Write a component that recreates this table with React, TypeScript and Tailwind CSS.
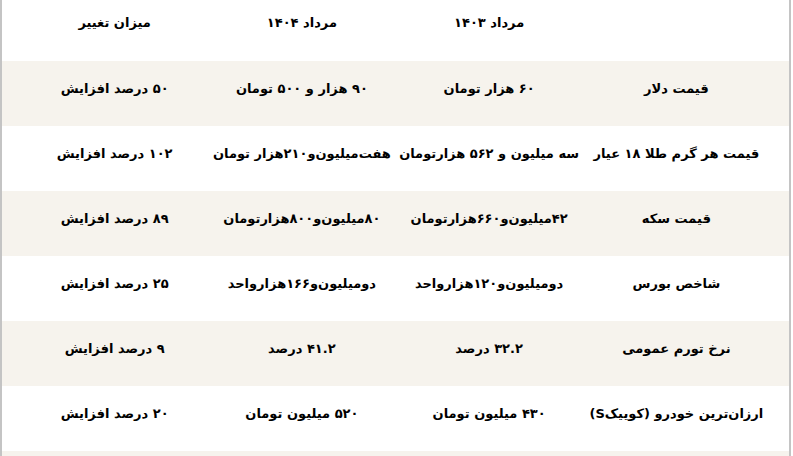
const header = ["", "مرداد ۱۴۰۳", "مرداد ۱۴۰۴", "میزان تغییر"];

const rows: string[][] = [
  ["قیمت دلار", "۶۰ هزار تومان", "۹۰ هزار و ۵۰۰ تومان", "۵۰ درصد افزایش"],
  ["قیمت هر گرم طلا ۱۸ عیار", "سه میلیون و ۵۶۲ هزارتومان", "هفت‌میلیون‌و۲۱۰هزار تومان", "۱۰۲ درصد افزایش"],
  ["قیمت سکه", "۴۲میلیون‌و۶۶۰هزارتومان", "۸۰میلیون‌و۸۰۰هزارتومان", "۸۹ درصد افزایش"],
  ["شاخص بورس", "دومیلیون‌و۱۲۰هزارواحد", "دومیلیون‌و۱۶۶هزارواحد", "۲۵ درصد افزایش"],
  ["نرخ تورم عمومی", "۳۲.۲ درصد", "۴۱.۲ درصد", "۹ درصد افزایش"],
  ["ارزان‌ترین خودرو (کوییک‌S)", "۴۳۰ میلیون تومان", "۵۲۰ میلیون تومان", "۲۰ درصد افزایش"],
];

const App = () => {
  return (
    <div
      dir="rtl"
      className="w-[793px] h-[456px] overflow-hidden bg-white text-[13px] font-bold text-black"
      style={{ fontFamily: '"DejaVu Sans", sans-serif' }}
    >
      <div className="mr-[2px] border-l-2 border-r-2 border-[#c4c4c4] h-full">
        <div className="grid grid-cols-4 h-[61px] px-[19px] pt-[13px] leading-5">
          {header.map((h, i) => (
            <div key={i} className="text-center whitespace-nowrap">
              {h}
            </div>
          ))}
        </div>
        {rows.map((row, r) => (
          <div
            key={r}
            className={
              "grid grid-cols-4 h-[65px] px-[19px] pt-[18px] leading-5 " +
              (r % 2 === 0 ? "bg-[#f6f3ed]" : "bg-white")
            }
          >
            {row.map((c, i) => (
              <div key={i} className="text-center whitespace-nowrap">
                {c}
              </div>
            ))}
          </div>
        ))}
        <div className="h-[65px] bg-[#f6f3ed]" />
      </div>
    </div>
  );
};

export default App;
